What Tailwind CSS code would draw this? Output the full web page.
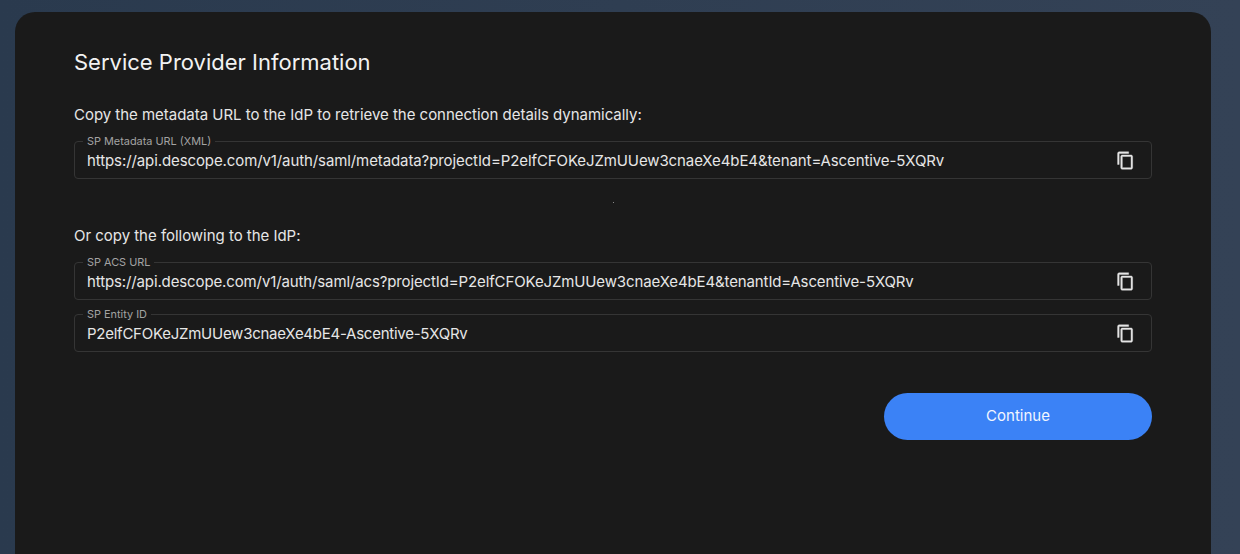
<!DOCTYPE html>
<html lang="en">

<head>
  <meta charset="UTF-8" />
  <title>Service Provider Information</title>
  <script src="https://cdn.jsdelivr.net/npm/@tailwindcss/browser@4"></script>
</head>

<body class="h-[554px] overflow-hidden bg-gradient-to-r from-[#2a3a4e] to-[#344256] font-['Inter',sans-serif] text-white">
  <div class="pl-[15px] pr-[29px] pt-3">
    <div class="h-[542px] rounded-t-[20px] bg-[#1a1a1a] pl-[59px] pr-[59px] pt-[36px]">
      <h1 class="text-[22px] leading-[28px] text-[#f2f2f2]">Service Provider Information</h1>

      <p class="mt-[29px] text-[15px] leading-[20px] tracking-[-0.025px] text-[#e6e6e6]">Copy the metadata URL to the IdP to retrieve the connection details dynamically:</p>

      <fieldset class="mt-[10px] flex h-[44px] items-center justify-between rounded border border-[#353535] pb-[3px] pl-3 pr-4">
        <legend class="-ml-1 px-1 text-[10.9px] leading-[12px] text-[#a3a3a3]">SP Metadata URL (XML)</legend>
        <span class="text-[15px] leading-[20px] tracking-[-0.1px] text-[#e6e6e6]">https://api.descope.com/v1/auth/saml/metadata?projectId=P2elfCFOKeJZmUUew3cnaeXe4bE4&amp;tenant=Ascentive-5XQRv</span>
        <svg class="mb-[1px] h-[19px] w-[19px]" viewBox="0 0 24 24" fill="#e6e6e6" stroke="#e6e6e6" stroke-width="0.5"><path d="M16 1H4c-1.1 0-2 .9-2 2v14h2V3h12V1zm3 4H8c-1.1 0-2 .9-2 2v14c0 1.1.9 2 2 2h11c1.100 0 2-.9 2-2V7c0-1.100-.9-2-2-2zm0 16H8V7h11v14z"/></svg>
      </fieldset>

      <div class="mx-auto mt-[23px] h-px w-px bg-[#8a8a8a]"></div>

      <p class="mt-[23px] text-[15px] leading-[20px] tracking-[-0.025px] text-[#e6e6e6]">Or copy the following to the IdP:</p>

      <fieldset class="mt-[10px] flex h-[44px] items-center justify-between rounded border border-[#353535] pb-[3px] pl-3 pr-4">
        <legend class="-ml-1 px-1 text-[10.9px] leading-[12px] text-[#a3a3a3]">SP ACS URL</legend>
        <span class="text-[15px] leading-[20px] tracking-[-0.125px] text-[#e6e6e6]">https://api.descope.com/v1/auth/saml/acs?projectId=P2elfCFOKeJZmUUew3cnaeXe4bE4&amp;tenantId=Ascentive-5XQRv</span>
        <svg class="mb-[1px] h-[19px] w-[19px]" viewBox="0 0 24 24" fill="#e6e6e6" stroke="#e6e6e6" stroke-width="0.5"><path d="M16 1H4c-1.1 0-2 .9-2 2v14h2V3h12V1zm3 4H8c-1.1 0-2 .9-2 2v14c0 1.1.9 2 2 2h11c1.100 0 2-.9 2-2V7c0-1.100-.9-2-2-2zm0 16H8V7h11v14z"/></svg>
      </fieldset>

      <fieldset class="mt-[8px] flex h-[44px] items-center justify-between rounded border border-[#353535] pb-[3px] pl-3 pr-4">
        <legend class="-ml-1 px-1 text-[10.9px] leading-[12px] text-[#a3a3a3]">SP Entity ID</legend>
        <span class="text-[15px] leading-[20px] tracking-[-0.25px] text-[#e6e6e6]">P2elfCFOKeJZmUUew3cnaeXe4bE4-Ascentive-5XQRv</span>
        <svg class="mb-[1px] h-[19px] w-[19px]" viewBox="0 0 24 24" fill="#e6e6e6" stroke="#e6e6e6" stroke-width="0.5"><path d="M16 1H4c-1.1 0-2 .9-2 2v14h2V3h12V1zm3 4H8c-1.1 0-2 .9-2 2v14c0 1.1.9 2 2 2h11c1.100 0 2-.9 2-2V7c0-1.100-.9-2-2-2zm0 16H8V7h11v14z"/></svg>
      </fieldset>

      <div class="mt-[41px] flex justify-end">
        <button class="h-[47px] w-[268px] rounded-full bg-[#3b82f6] text-[15px] text-[#f2f6ff]">Continue</button>
      </div>
    </div>
  </div>
</body>

</html>
